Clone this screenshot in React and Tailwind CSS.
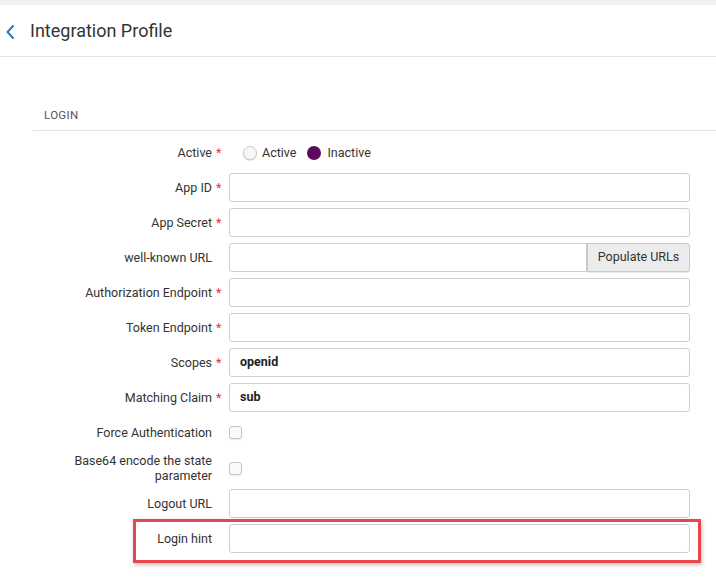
import React from "react";

const font = { fontFamily: "Roboto, 'Liberation Sans', sans-serif" };

function Label({ children, required }) {
  return (
    <div className="w-[179px] text-right text-[12.5px] leading-[15px] text-[#333] shrink-0">
      <span className="relative">
        {children}
        {required && (
          <span className="absolute left-full top-0 ml-[4px] text-[#e0383e]">*</span>
        )}
      </span>
    </div>
  );
}

function TextInput({ value }) {
  return (
    <div className="ml-[17px] w-[461px] h-[29px] border border-[#cfcfcf] rounded-[3px] bg-white flex items-center px-[10px] text-[12.5px] font-bold text-[#222]">
      {value}
    </div>
  );
}

function Row({ label, required, value, children, h = "h-[29px]" }) {
  return (
    <div className={`flex items-center ${h}`}>
      <Label required={required}>{label}</Label>
      {children ?? <TextInput value={value} />}
    </div>
  );
}

function Checkbox() {
  return (
    <div className="ml-[17px] w-[13px] h-[13px] rounded-[3px] border border-[#c4c4c4] bg-[#fafafa] shadow-[0_1px_1px_rgba(0,0,0,0.08)]" />
  );
}

export default function App() {
  return (
    <div className="relative w-[716px] h-[580px] bg-white overflow-hidden" style={font}>
      <div className="h-[5px] bg-[#f1f1f1]" />
      <div className="h-[52px] flex items-center border-b border-[#e2e2e2]">
        <svg className="ml-[5px] mt-[2px]" width="10" height="16" viewBox="0 0 10 16">
          <path d="M8 2 L2.5 8 L8 14" fill="none" stroke="#2f78bd" strokeWidth="2" strokeLinecap="round" strokeLinejoin="round" />
        </svg>
        <div className="ml-[15px] text-[18px] text-[#333]">Integration Profile</div>
      </div>

      <div className="ml-[33px] mt-[44px] h-[30px] border-b border-[#e2e2e2] flex items-center pl-[11px] text-[11.5px] tracking-[0.3px] text-[#555]">
        LOGIN
      </div>

      <div className="pl-[33px] pt-[7px] flex flex-col gap-[6px]">
        <Row label="Active" required>
          <div className="ml-[31px] flex items-center text-[12.5px] text-[#333] pt-[1px]">
            <div className="w-[14px] h-[14px] rounded-full border border-[#c8c8c8] bg-[#f7f7f7] shadow-[0_1px_1px_rgba(0,0,0,0.12)]" />
            <span className="ml-[5px]">Active</span>
            <div className="ml-[11px] w-[14px] h-[14px] rounded-full bg-[#5c0a5e]" />
            <span className="ml-[6px]">Inactive</span>
          </div>
        </Row>
        <Row label="App ID" required />
        <Row label="App Secret" required />
        <Row label="well-known URL">
          <div className="ml-[17px] w-[461px] h-[29px] flex">
            <div className="flex-1 border border-[#cfcfcf] rounded-l-[3px] bg-white" />
            <div className="w-[103px] border border-[#c8c8c8] rounded-r-[3px] bg-[#ececec] flex items-center justify-center text-[12.5px] text-[#333] shadow-[0_1px_1px_rgba(0,0,0,0.1)]">
              Populate URLs
            </div>
          </div>
        </Row>
        <Row label="Authorization Endpoint" required />
        <Row label="Token Endpoint" required />
        <Row label="Scopes" required value="openid" />
        <Row label="Matching Claim" required value="sub" />
        <Row label="Force Authentication">
          <Checkbox />
        </Row>
        <Row label={<>Base64 encode the state<br />parameter</>} h="h-[30px]">
          <Checkbox />
        </Row>
        <Row label="Logout URL" />
        <Row label="Login hint" />
      </div>

      <div className="absolute left-[133px] top-[519px] w-[568px] h-[44px] border-[3px] border-[#e8464a] shadow-[1px_2px_4px_rgba(0,0,0,0.25)]" />
    </div>
  );
}
